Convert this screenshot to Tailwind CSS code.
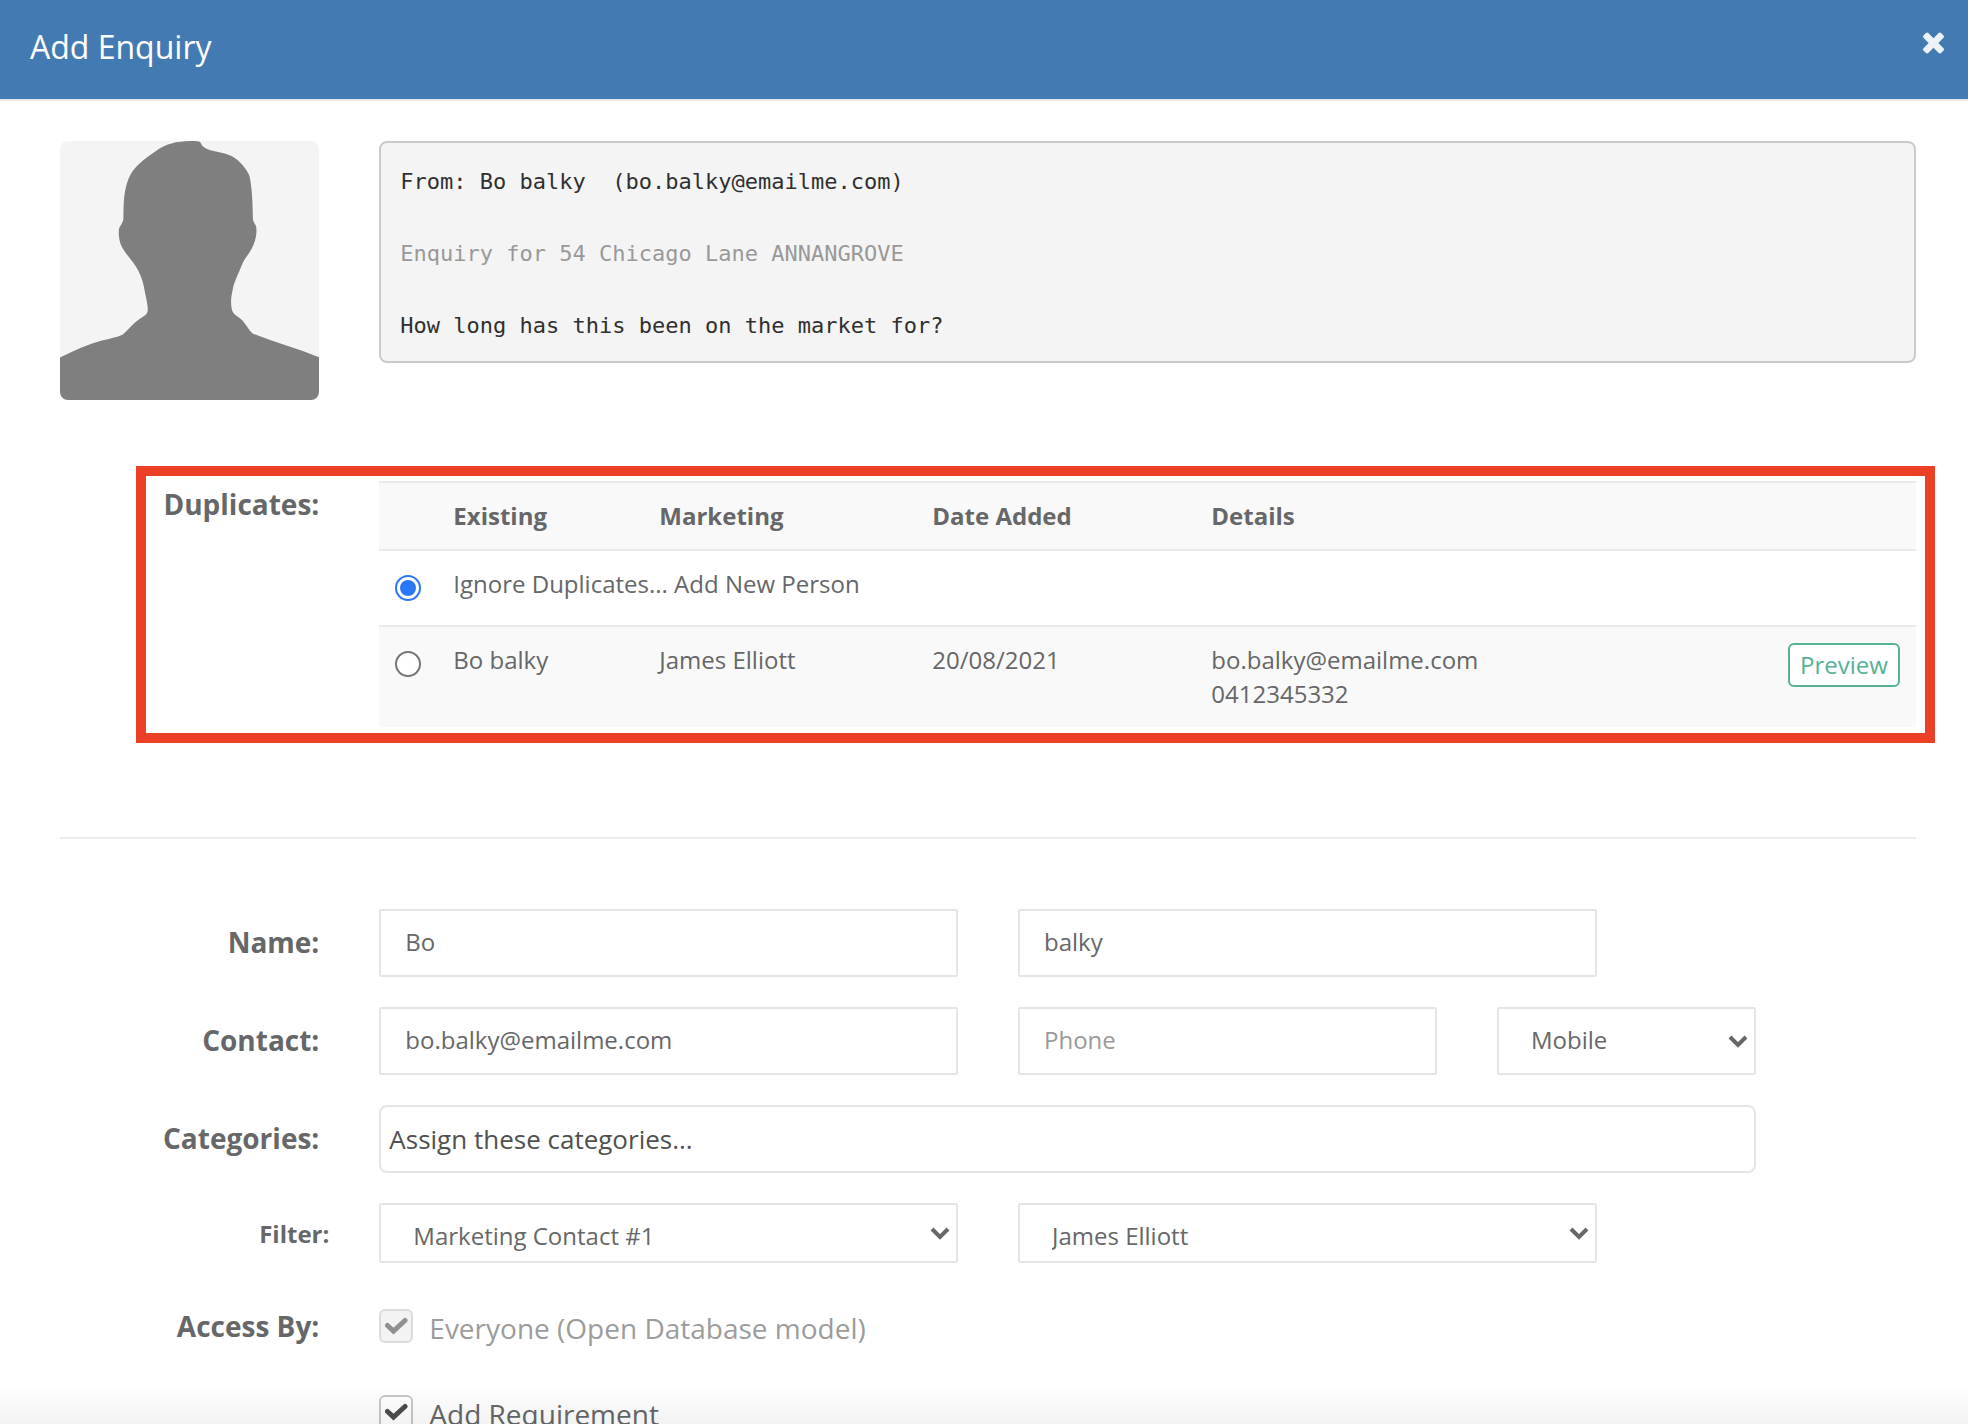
<!DOCTYPE html>
<html lang="en">
<head>
<meta charset="utf-8">
<meta name="viewport" content="width=device-width, initial-scale=1">
<title>Add Enquiry</title>
<script src="https://cdn.jsdelivr.net/npm/@tailwindcss/browser@4"></script>
</head>
<body class="bg-white font-['Open_Sans',sans-serif] text-2xl text-[#666768]">
<div role="dialog" aria-labelledby="title" class="relative h-screen overflow-hidden bg-white">
  <header class="flex h-[101px] items-start justify-between border-b-2 border-[#e5e5e5] bg-[#447ab2] pr-6 pl-[30px]">
    <h1 id="title" class="pt-6 text-[32px] leading-[46px] text-white">Add Enquiry</h1>
    <button type="button" aria-label="Close" class="mt-8 text-[#edf1f8]">
      <svg class="h-[22px] w-[21px]" viewBox="302 366 1188 1188" fill="currentColor" aria-hidden="true"><path d="M1490 1322q0 40-28 68l-136 136q-28 28-68 28t-68-28l-294-294-294 294q-28 28-68 28t-68-28l-136-136q-28-28-28-68t28-68l294-294-294-294q-28-28-28-68t28-68l136-136q28-28 68-28t68 28l294 294 294-294q28-28 68-28t68 28l136 136q28 28 28 68t-28 68l-294 294 294 294q28 28 28 68z"/></svg>
    </button>
  </header>

  <main class="pt-10 pr-[52px] pl-[60px]">
    <section class="grid grid-cols-12 items-start gap-x-[60px]">
      <svg class="col-span-2 aspect-square w-full rounded-lg bg-[#f4f4f4]" viewBox="0 0 260 260" role="img" aria-label="No photo"><path fill="#7f7f7f" d="M0 217C14 210 28 204 42 200C50 198 57 197 63 194C68 190 73 183 79 179C83 176 88 175 88 169C88 164 86 156 85 151C84 144 82 136 78 129C73 120 65 113 61 104C59 99 58 89 60 86C62 83 63 81 63.500 79C64 63 63 48 71 33C77 23 89 15 99 8C110 1 122 0 135 0C143 0 140 3 144 6C151 11 164 11 172 15C181 20 187 28 190 35C193 49 193 64 193.500 79C194 82 197 84 197 89C197 95 196 99 194 104C191 112 185 117 182 125C179 133 174 142 173 150C171 158 171 165 173 171C175 175 180 177 183 180C187 185 189 189 193 193C215 202 238 208 260 217V260H0Z"/></svg>
      <pre class="col-span-10 rounded-lg border-2 border-[#cbcbcb] bg-[#f4f4f4] px-[19px] pt-[21px] pb-[17px] font-['DejaVu_Sans_Mono',monospace] text-[22px] leading-9 text-[#303030]">From: Bo balky  (bo.balky@emailme.com)

<span class="text-[#999]">Enquiry for 54 Chicago Lane ANNANGROVE</span>

How long has this been on the market for?</pre>
    </section>

    <section class="relative mt-[81px] grid grid-cols-12 gap-x-[60px]">
      <h2 class="col-span-2 pt-1 text-right text-[28px] leading-[38px] font-bold">Duplicates:</h2>
      <table class="col-span-10 w-full table-fixed border-collapse text-left leading-[34px]">
        <colgroup><col class="w-[58px]"><col class="w-[206px]"><col class="w-[273px]"><col class="w-[279px]"><col><col class="w-[144px]"></colgroup>
        <thead>
          <tr class="h-[68px] border-y-2 border-[#e8e8e8] bg-[#f9f9f9]">
            <td></td><th scope="col" class="px-4">Existing</th><th scope="col" class="px-4">Marketing</th><th scope="col" class="px-4">Date Added</th><th scope="col" class="px-4">Details</th><td></td>
          </tr>
        </thead>
        <tbody class="align-top">
          <tr class="h-[76px]">
            <td class="pt-6 pl-4"><input type="radio" name="dup" id="dup-new" checked class="block size-[26px] appearance-none rounded-full border-2 border-[#2a78f8] bg-[#2a78f8] bg-clip-content p-[3px]"></td>
            <td class="px-4 pt-4" colspan="5"><label for="dup-new">Ignore Duplicates... Add New Person</label></td>
          </tr>
          <tr class="h-[101px] border-t-2 border-[#e8e8e8] bg-[#f9f9f9]">
            <td class="pt-6 pl-4"><input type="radio" name="dup" id="dup-1" class="block size-[26px] appearance-none rounded-full border-2 border-[#767676] bg-white"></td>
            <td class="px-4 pt-4"><label for="dup-1">Bo balky</label></td>
            <td class="px-4 pt-4">James Elliott</td>
            <td class="px-4 pt-4">20/08/2021</td>
            <td class="px-4 pt-4">bo.balky@emailme.com<br>0412345332</td>
            <td class="px-4 pt-4"><button type="button" class="block h-11 w-full rounded-md border-2 border-[#55b295] bg-white leading-[38px] text-[#55b295]">Preview</button></td>
          </tr>
        </tbody>
      </table>
      <div class="pointer-events-none absolute -top-[15px] -right-[19px] -bottom-4 left-19 border-10 border-[#eb4025]" aria-hidden="true"></div>
    </section>

    <hr class="mt-[110px] border-t-2 border-[#ececec]">

    <form class="mt-[70px] grid grid-cols-12 gap-x-[60px] gap-y-[30px]">
      <label for="first" class="col-span-2 text-right text-[28px] leading-[66px] font-bold">Name:</label>
      <input id="first" type="text" value="Bo" class="col-span-4 h-17 w-full rounded-xs border-2 border-[#e5e5e5] px-6 pb-1">
      <input aria-label="Last name" type="text" value="balky" class="col-span-4 h-17 w-full rounded-xs border-2 border-[#e5e5e5] px-6 pb-1">

      <label for="email" class="col-span-2 col-start-1 text-right text-[28px] leading-[66px] font-bold">Contact:</label>
      <input id="email" type="text" value="bo.balky@emailme.com" class="col-span-4 h-17 w-full rounded-xs border-2 border-[#e5e5e5] px-6 pb-1">
      <input aria-label="Phone" type="text" placeholder="Phone" class="col-span-3 h-17 w-full rounded-xs border-2 border-[#e5e5e5] px-6 pb-1 placeholder:text-[#999]">
      <div class="relative col-span-2">
        <select aria-label="Phone type" class="h-17 w-full appearance-none rounded-xs border-2 border-[#e5e5e5] bg-white px-8 pb-0.5"><option>Mobile</option></select>
        <svg class="pointer-events-none absolute top-7 right-2 h-[13px] w-5" viewBox="0 0 20 13" fill="none" stroke="#666768" stroke-width="4" aria-hidden="true"><path d="M2 2l8 8 8-8"/></svg>
      </div>

      <label for="cats" class="col-span-2 col-start-1 text-right text-[28px] leading-[66px] font-bold">Categories:</label>
      <input id="cats" type="text" placeholder="Assign these categories..." class="col-span-9 h-17 w-full rounded-lg border-2 border-[#e5e5e5] px-2 text-[26px] placeholder:text-[#505050]">

      <label for="filter" class="col-span-2 col-start-1 -mr-[10px] text-right leading-[62px] font-bold">Filter:</label>
      <div class="relative col-span-4">
        <select id="filter" class="block h-15 w-full appearance-none rounded-xs border-2 border-[#e5e5e5] bg-white px-8 pt-1.5"><option>Marketing Contact #1</option></select>
        <svg class="pointer-events-none absolute top-6 right-2 h-[13px] w-5" viewBox="0 0 20 13" fill="none" stroke="#666768" stroke-width="4" aria-hidden="true"><path d="M2 2l8 8 8-8"/></svg>
      </div>
      <div class="relative col-span-4">
        <select aria-label="Filter value" class="block h-15 w-full appearance-none rounded-xs border-2 border-[#e5e5e5] bg-white px-8 pt-1.5"><option>James Elliott</option></select>
        <svg class="pointer-events-none absolute top-6 right-2 h-[13px] w-5" viewBox="0 0 20 13" fill="none" stroke="#666768" stroke-width="4" aria-hidden="true"><path d="M2 2l8 8 8-8"/></svg>
      </div>

      <div class="col-span-2 col-start-1 pt-3 text-right text-[28px] leading-[38px] font-bold">Access By:</div>
      <div class="col-span-9 flex flex-col gap-[46px] pt-[14px] text-[28px] leading-[38px]">
        <div class="flex h-10 items-start gap-4">
          <span class="relative block size-[34px]">
            <input id="everyone" type="checkbox" checked disabled class="block size-[34px] appearance-none rounded-md border-2 border-[#dcdcdc] bg-[#f3f3f3]">
            <svg class="pointer-events-none absolute top-2 left-1.5 h-[18px] w-[23px]" viewBox="0 0 23 18" fill="none" stroke="#909090" stroke-width="5" stroke-linecap="round" aria-hidden="true"><path d="M2.500 8.500L8.500 14L20 3.500"/></svg>
          </span>
          <label for="everyone" class="text-[#9c9c9c]">Everyone (Open Database model)</label>
        </div>
        <div class="flex h-10 items-start gap-4">
          <span class="relative block size-[34px]">
            <input id="req" type="checkbox" checked class="block size-[34px] appearance-none rounded-md border-2 border-[#c8c8c8] bg-white">
            <svg class="pointer-events-none absolute top-2 left-1.5 h-[18px] w-[23px]" viewBox="0 0 23 18" fill="none" stroke="#4c4c4c" stroke-width="5" stroke-linecap="round" aria-hidden="true"><path d="M2.500 8.500L8.500 14L20 3.500"/></svg>
          </span>
          <label for="req">Add Requirement</label>
        </div>
      </div>
    </form>
  </main>
  <div class="pointer-events-none absolute inset-x-0 bottom-0 h-10 bg-linear-to-t from-black/5 to-transparent" aria-hidden="true"></div>
</div>
</body>
</html>
